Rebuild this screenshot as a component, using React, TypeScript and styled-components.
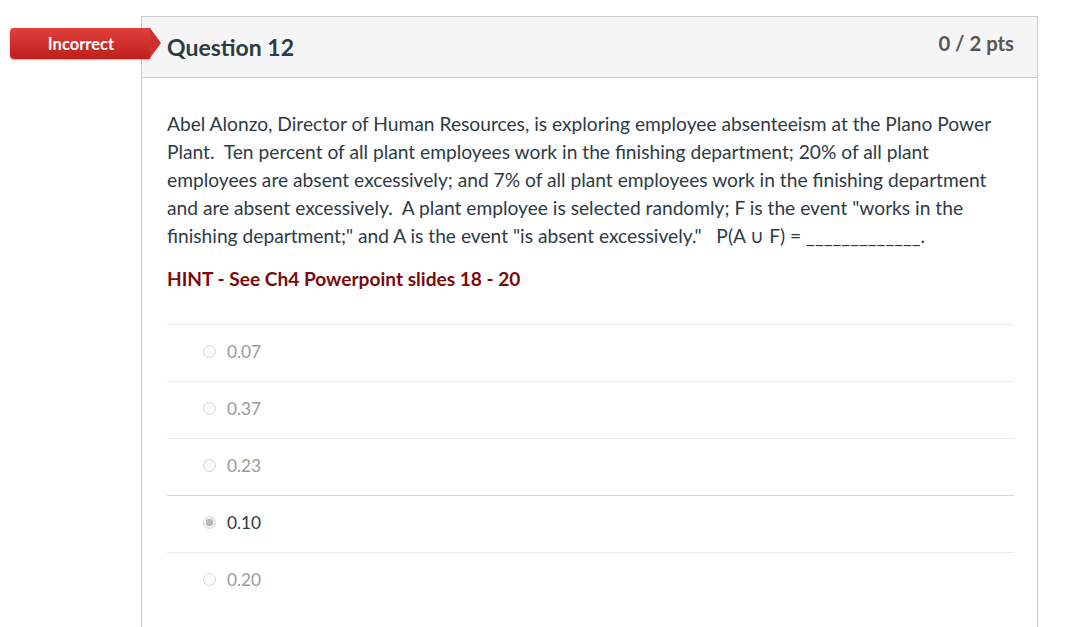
import styled, { createGlobalStyle } from "styled-components";

const GlobalStyle = createGlobalStyle`
  body {
    margin: 0;
    background: #ffffff;
    font-family: Lato, "Open Sans", "Liberation Sans", sans-serif;
    color: #2d3b45;
  }
`;

const Page = styled.div`
  padding: 16px 0 0 141px;
  width: 897px;
`;

const Card = styled.div`
  position: relative;
  border: 1px solid #c7cdd1;
  border-bottom: none;
  height: 611px;
`;

const Badge = styled.div`
  position: absolute;
  left: -132px;
  top: 11px;
  width: 140px;
  height: 31px;
  display: flex;
  align-items: center;
  justify-content: center;
  padding-left: 2px;
  box-sizing: border-box;
  color: #ffffff;
  font-weight: 700;
  font-size: 16.5px;
  border-radius: 4px 0 0 4px;
  background: linear-gradient(#e0403c, #c0201c);
  box-shadow: 0 1px 2px rgba(0, 0, 0, 0.3);

  &::after {
    content: "";
    position: absolute;
    right: -11px;
    top: 0;
    border-top: 15.5px solid transparent;
    border-bottom: 15.5px solid transparent;
    border-left: 11px solid #d0302c;
  }
`;

const Header = styled.div`
  display: flex;
  justify-content: space-between;
  align-items: flex-start;
  height: 60px;
  padding: 0 23px 0 25px;
  background: #f5f5f5;
  border-bottom: 1px solid #c7cdd1;
`;

const Title = styled.h2`
  margin: 16px 0 0;
  font-size: 23px;
  font-weight: 700;
  color: #2d3b45;
`;

const Points = styled.div`
  margin-top: 14px;
  font-size: 20.3px;
  font-weight: 700;
  color: #555555;
`;

const Body = styled.div`
  padding: 32px 23px 0 25px;
`;

const Prompt = styled.p`
  margin: 0;
  font-size: 19.2px;
  line-height: 28px;
  color: #2d3b45;
  white-space: pre-wrap;
`;

const Hint = styled.p`
  margin: 15px 0 0;
  font-size: 19.1px;
  line-height: 28px;
  font-weight: 700;
  color: #7a0a0a;
`;

const Answers = styled.div`
  margin-top: 31px;
`;

const Answer = styled.div<{ $selected?: boolean }>`
  display: flex;
  align-items: center;
  height: 57px;
  padding: 0 0 4px 36px;
  box-sizing: border-box;
  border-top: 1px solid ${(p) => (p.$selected ? "#d6d6d6" : "#ececec")};
  font-size: 17.3px;
  color: ${(p) => (p.$selected ? "#2d3b45" : "#9a9a9a")};
`;

const Radio = styled.span<{ $selected?: boolean }>`
  width: 11px;
  height: 11px;
  border-radius: 50%;
  border: 1px solid #d8d8d8;
  background: ${(p) =>
    p.$selected
      ? "radial-gradient(circle, #b8b8b8 0 3.5px, #f2f2f2 4px)"
      : "#fafafa"};
  margin-right: 11px;
  flex-shrink: 0;
`;

const answers = [
  { value: "0.07" },
  { value: "0.37" },
  { value: "0.23" },
  { value: "0.10", selected: true },
  { value: "0.20" },
];

const App = () => {
  return (
    <>
      <GlobalStyle />
      <Page>
        <Card>
          <Badge>Incorrect</Badge>
          <Header>
            <Title>Question 12</Title>
            <Points>0 / 2 pts</Points>
          </Header>
          <Body>
            <Prompt>
              {
                'Abel Alonzo, Director of Human Resources, is exploring employee absenteeism at the Plano Power Plant.  Ten percent of all plant employees work in the finishing department; 20% of all plant employees are absent excessively; and 7% of all plant employees work in the finishing department and are absent excessively.  A plant employee is selected randomly; F is the event "works in the finishing department;" and A is the event "is absent excessively."   P(A \u222A F) = _____________.'
              }
            </Prompt>
            <Hint>HINT - See Ch4 Powerpoint slides 18 - 20</Hint>
            <Answers>
              {answers.map((a) => (
                <Answer key={a.value} $selected={a.selected}>
                  <Radio $selected={a.selected} />
                  {a.value}
                </Answer>
              ))}
            </Answers>
          </Body>
        </Card>
      </Page>
    </>
  );
};

export default App;
